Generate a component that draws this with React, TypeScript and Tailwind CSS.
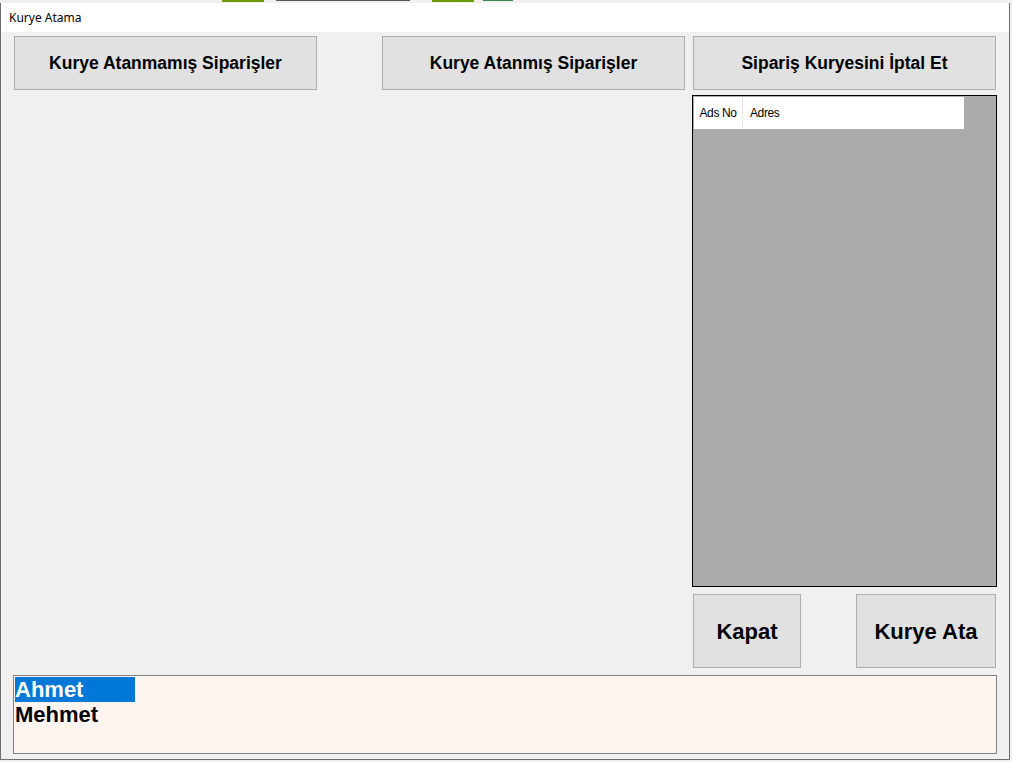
import React from 'react';

const sans = { fontFamily: '"Liberation Sans", Arial, sans-serif' };

function WinButton({ label, className }: { label: string; className: string }) {
  return (
    <div
      className={`flex items-center justify-center border border-[#adadad] bg-[#e1e1e1] font-bold text-black ${className}`}
    >
      {label}
    </div>
  );
}

export default function App() {
  return (
    <div className="h-[762px] w-[1012px] overflow-hidden bg-[#f0f0f0]" style={sans}>
      {/* strip of the window behind */}
      <div className="relative h-[3px] w-full bg-[#f0f0f0]">
        <div className="absolute left-[222px] top-0 h-[2px] w-[42px] bg-[#6a9a00]" />
        <div className="absolute left-[276px] top-0 h-[1px] w-[134px] bg-[#555]" />
        <div className="absolute left-[432px] top-0 h-[2px] w-[42px] bg-[#6a9a00]" />
        <div className="absolute left-[483px] top-0 h-[1px] w-[30px] bg-[#3a8a50]" />
      </div>
      <div className="flex h-[757px] w-[1010px] flex-col border border-t-0 border-[#6d6d6d]">
        <div
          className="flex h-[29px] shrink-0 items-center bg-white pl-[8px] text-[12px] text-black"
          style={{ fontFamily: '"Noto Sans", "Open Sans", sans-serif' }}
        >
          Kurye Atama
        </div>
        <div className="flex flex-1 flex-col bg-[#f0f0f0] pl-[13px] pt-[4px]">
          <div className="flex">
            <WinButton label="Kurye Atanmamış Siparişler" className="h-[54px] w-[303px] text-[17.5px]" />
            <WinButton label="Kurye Atanmış Siparişler" className="ml-[65px] h-[54px] w-[303px] text-[17.5px]" />
            <WinButton label="Sipariş Kuryesini İptal Et" className="ml-[8px] h-[54px] w-[303px] text-[17.5px]" />
          </div>
          <div className="ml-[678px] mt-[5px] flex h-[492px] w-[305px] flex-col border border-black bg-[#ababab] p-[1px]">
            <div
              className="flex h-[32px] w-[270px] items-center bg-white text-[12px] tracking-[-0.4px] text-black"
              style={{ fontFamily: '"Liberation Sans Narrow", "Liberation Sans", sans-serif' }}
            >
              <div className="flex h-full w-[49px] items-center justify-center border-r border-[#e5e5e5]">Ads No</div>
              <div className="pl-[7px]">Adres</div>
            </div>
          </div>
          <div className="ml-[679px] mt-[7px] flex">
            <WinButton label="Kapat" className="h-[74px] w-[108px] text-[22px]" />
            <WinButton label="Kurye Ata" className="ml-[55px] h-[74px] w-[140px] text-[22px]" />
          </div>
          <div className="-ml-[1px] mt-[7px] h-[79px] w-[984px] border border-[#828282] bg-[#fff5f0] pl-[1px] pt-[1px] text-[22px] font-bold leading-[25px]">
            <div className="w-[120px] bg-[#0078d7] text-white">Ahmet</div>
            <div className="text-black">Mehmet</div>
          </div>
        </div>
      </div>
    </div>
  );
}
